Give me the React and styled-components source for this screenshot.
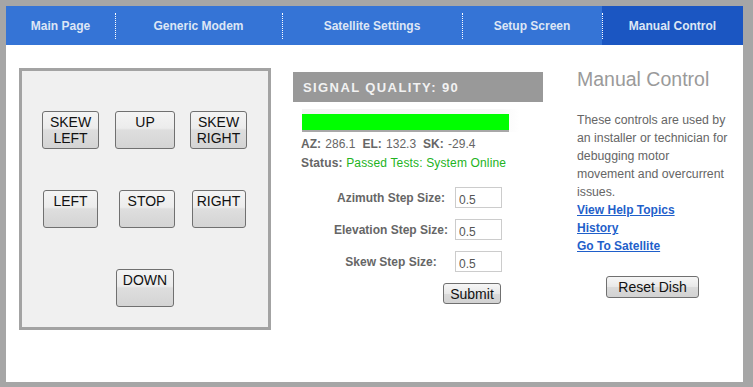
import React from "react";
import styled, { createGlobalStyle } from "styled-components";

const GlobalStyle = createGlobalStyle`
  html, body {
    margin: 0;
    padding: 0;
    background: #a6a6a6;
  }
  body {
    font-family: "Liberation Sans", Arial, sans-serif;
  }
`;

const Frame = styled.div`
  width: 753px;
  height: 387px;
  box-sizing: border-box;
  padding: 6px 10px 5px 6px;
  background: #a6a6a6;
`;

const Page = styled.div`
  height: 100%;
  background: #ffffff;
  display: flex;
  flex-direction: column;
`;

const NavBar = styled.div`
  display: flex;
  height: 39px;
  background: #3574d6;
`;

const NavItem = styled.div`
  width: ${(p) => p.$width}px;
  position: relative;
  display: flex;
  align-items: center;
  justify-content: center;
  font-size: 12px;
  font-weight: bold;
  color: #dde6f5;
  background: ${(p) => (p.$active ? "#1b56c2" : "transparent")};

  &:not(:first-child)::before {
    content: "";
    position: absolute;
    left: 0;
    top: 7px;
    bottom: 6px;
    border-left: 1px dotted #ffffff;
  }
`;

const Content = styled.div`
  display: flex;
  padding: 23px 0 0 13px;
`;

const Pad = styled.div`
  width: 252px;
  height: 262px;
  box-sizing: border-box;
  border: 3px solid #a3a3a3;
  background: #f0f0f0;
  padding-top: 40px;
  display: grid;
  grid-template-columns: 75px 72px 72px;
  grid-auto-rows: 38px;
  row-gap: 41px;
  justify-content: center;
  justify-items: center;
  align-content: start;
`;

const PadButton = styled.button`
  width: ${(p) => p.$width}px;
  height: 38px;
  grid-column: ${(p) => p.$col || "auto"};
  margin-left: ${(p) => p.$shift || 0}px;
  padding: 2px 0 0;
  border: 1px solid #707070;
  border-radius: 3px;
  background: linear-gradient(
    to bottom,
    #f4f4f4 0%,
    #ececec 45%,
    #dedede 50%,
    #d4d4d4 100%
  );
  font-family: "Liberation Sans", Arial, sans-serif;
  font-size: 14px;
  line-height: 16px;
  color: #111111;
  display: flex;
  flex-direction: column;
  align-items: center;
  justify-content: flex-start;
  cursor: pointer;
`;

const Middle = styled.div`
  width: 250px;
  margin-left: 22px;
  margin-top: 4px;
`;

const SignalHeader = styled.div`
  height: 30px;
  background: #999999;
  color: #f2f2f2;
  font-size: 13px;
  font-weight: bold;
  letter-spacing: 1.4px;
  display: flex;
  align-items: center;
  padding-left: 10px;
`;

const BarTrack = styled.div`
  margin: 7px 0 0 9px;
  width: 218px;
  height: 23px;
  background: linear-gradient(to right, #f3f3f3, #f8f8f8 90%, #ffffff);
  padding-top: 5px;
  box-sizing: border-box;
`;

const BarFill = styled.div`
  height: 16px;
  background: #00ff00;
  border-bottom: 2px solid #a8a8a8;
`;

const InfoLine = styled.div`
  margin: ${(p) => p.$top}px 0 0 8px;
  font-size: 12px;
  color: #666666;
  line-height: 14px;
  white-space: nowrap;
  letter-spacing: ${(p) => p.$spacing || 0}px;
`;

const Reading = styled.span`
  margin-right: 7px;

  b {
    margin-right: 1px;
  }
`;

const Ok = styled.span`
  color: #22b322;
`;

const Form = styled.div`
  margin-top: 17px;
  display: grid;
  grid-template-columns: 120px 47px;
  column-gap: 4px;
  row-gap: 11px;
  padding-left: 38px;
  align-items: center;
`;

const Label = styled.div`
  font-size: 12px;
  font-weight: bold;
  color: #666666;
  text-align: center;
  white-space: nowrap;
`;

const Field = styled.input`
  width: 47px;
  height: 21px;
  box-sizing: border-box;
  border: 1px solid #cccccc;
  padding: 5px 0 0 3px;
  font-family: "Liberation Sans", Arial, sans-serif;
  font-size: 12px;
  color: #555555;
  background: #ffffff;
`;

const Actions = styled.div`
  display: flex;
  justify-content: flex-end;
  width: 208px;
  margin-top: 11px;
`;

const PlainButton = styled.button`
  width: ${(p) => p.$width}px;
  height: ${(p) => p.$height || 21}px;
  padding: 0;
  border: 1px solid #707070;
  border-radius: 3px;
  background: linear-gradient(to bottom, #f6f6f6 0%, #e8e8e8 50%, #dadada 52%, #d2d2d2 100%);
  font-family: "Liberation Sans", Arial, sans-serif;
  font-size: 14px;
  color: #111111;
  cursor: pointer;
`;

const Side = styled.div`
  width: 151px;
  margin-left: 34px;
  display: flex;
  flex-direction: column;
`;

const SideTitle = styled.div`
  font-size: 19.5px;
  color: #9a9a9a;
  line-height: 23px;
  margin-top: 0;
`;

const SideText = styled.div`
  margin-top: 20px;
  font-size: 12.3px;
  line-height: 18px;
  color: #666666;
`;

const SideLink = styled.a`
  display: block;
  font-size: 12px;
  line-height: 18px;
  font-weight: bold;
  color: #1f5fca;
  text-decoration: underline;
`;

const SideActions = styled.div`
  display: flex;
  justify-content: center;
  margin-top: 21px;
`;

const tabs = [
  { label: "Main Page", width: 109 },
  { label: "Generic Modem", width: 167 },
  { label: "Satellite Settings", width: 180 },
  { label: "Setup Screen", width: 140 },
  { label: "Manual Control", width: 141, active: true },
];

const padButtons = [
  { lines: ["SKEW", "LEFT"], width: 57, shift: -5 },
  { lines: ["UP"], width: 60, shift: -3 },
  { lines: ["SKEW", "RIGHT"], width: 57 },
  { lines: ["LEFT"], width: 55, shift: -5 },
  { lines: ["STOP"], width: 56 },
  { lines: ["RIGHT"], width: 54 },
  { lines: ["DOWN"], width: 58, col: 2, shift: -3 },
];

const readings = [
  ["AZ:", "286.1"],
  ["EL:", "132.3"],
  ["SK:", "-29.4"],
];

const steps = ["Azimuth Step Size:", "Elevation Step Size:", "Skew Step Size:"];

export default function App() {
  return (
    <Frame>
      <GlobalStyle />
      <Page>
        <NavBar>
          {tabs.map((t) => (
            <NavItem key={t.label} $width={t.width} $active={t.active}>
              {t.label}
            </NavItem>
          ))}
        </NavBar>

        <Content>
          <Pad>
            {padButtons.map((b) => (
              <PadButton
                key={b.lines.join(" ")}
                $width={b.width}
                $shift={b.shift}
                $col={b.col}
              >
                {b.lines.map((l) => (
                  <span key={l}>{l}</span>
                ))}
              </PadButton>
            ))}
          </Pad>

          <Middle>
            <SignalHeader>SIGNAL QUALITY: 90</SignalHeader>
            <BarTrack>
              <BarFill style={{ width: `${(90 / 90) * 207}px` }} />
            </BarTrack>
            <InfoLine $top={5}>
              {readings.map(([k, v]) => (
                <Reading key={k}>
                  <b>{k}</b> {v}
                </Reading>
              ))}
            </InfoLine>
            <InfoLine $top={5} $spacing={0.15}>
              <b>Status:</b> <Ok>Passed Tests: System Online</Ok>
            </InfoLine>

            <Form>
              {steps.map((s) => (
                <React.Fragment key={s}>
                  <Label>{s}</Label>
                  <Field defaultValue="0.5" />
                </React.Fragment>
              ))}
            </Form>
            <Actions>
              <PlainButton $width={58}>Submit</PlainButton>
            </Actions>
          </Middle>

          <Side>
            <SideTitle>Manual Control</SideTitle>
            <SideText>
              These controls are used by an installer or technician for
              debugging motor movement and overcurrent issues.
            </SideText>
            <SideLink href="#">View Help Topics</SideLink>
            <SideLink href="#">History</SideLink>
            <SideLink href="#">Go To Satellite</SideLink>
            <SideActions>
              <PlainButton $width={93} $height={22}>
                Reset Dish
              </PlainButton>
            </SideActions>
          </Side>
        </Content>
      </Page>
    </Frame>
  );
}
